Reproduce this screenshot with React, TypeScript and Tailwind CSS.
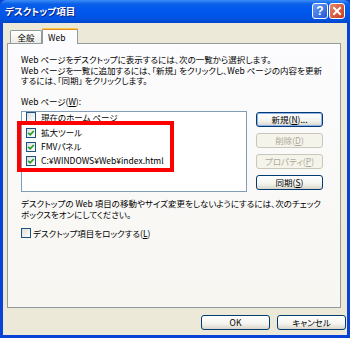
import React from 'react';

const jp = "font-['Noto_Sans_CJK_JP','Noto_Sans',sans-serif] [font-feature-settings:'palt']";

function Check({ checked = false }: { checked?: boolean }) {
  return (
    <span className="w-[10px] h-[10px] shrink-0 border border-[#1c5180] bg-[linear-gradient(135deg,#dcdcd7,#ffffff)] flex items-center justify-center">
      {checked && (
        <svg width="8" height="8" viewBox="0 0 8 8">
          <path d="M1.2 3.8 L3.2 5.8 L6.8 2" fill="none" stroke="#21a121" strokeWidth="1.7" />
        </svg>
      )}
    </span>
  );
}

function Btn({ children, disabled = false, isDefault = false, w = 'w-[67px]' }: { children: React.ReactNode; disabled?: boolean; isDefault?: boolean; w?: string }) {
  return (
    <div
      className={`${w} h-[15px] rounded-[3px] border flex items-center justify-center ${
        disabled
          ? 'border-[#c9c7ba] bg-[#f5f4ea] text-[#aca899]'
          : 'border-[#003c74] bg-[linear-gradient(180deg,#ffffff_0%,#f3f3ef_60%,#d9d5c8_100%)] text-black'
      } ${isDefault ? 'shadow-[inset_0_0_0_1px_#8fb0eb]' : ''}`}
    >
      {children}
    </div>
  );
}

export default function App() {
  const items = [
    { label: '現在のホーム ページ', checked: false },
    { label: '拡大ツール', checked: true },
    { label: 'FMVパネル', checked: true },
    { label: 'C:¥WINDOWS¥Web¥index.html', checked: true },
  ];

  return (
    <div className={`w-[350px] h-[338px] flex flex-col bg-[#0842d6] text-black text-[8.5px] leading-[10.5px] ${jp}`}>
      {/* title bar */}
      <div className="h-[23px] shrink-0 flex items-center pl-[5px] pr-[5px] rounded-t-[6px] bg-[linear-gradient(180deg,#3d8cf7_0%,#0a5fe8_18%,#0058ee_45%,#0054e3_80%,#0046c8_100%)]">
        <span className="text-white font-bold text-[9.5px] [text-shadow:1px_1px_0_#0a1f80]">デスクトップ項目</span>
        <div className="ml-auto flex gap-[1px] -mt-[1px]">
          <div className="w-[16px] h-[16px] rounded-[3px] border border-white bg-[linear-gradient(135deg,#6a9cf5,#2357d8)] flex items-center justify-center text-white font-bold text-[12px] leading-none font-['Liberation_Sans',sans-serif]">
            ?
          </div>
          <div className="w-[16px] h-[16px] rounded-[3px] border border-white bg-[linear-gradient(135deg,#e8876a,#c8391a)] flex items-center justify-center">
            <svg width="10" height="10" viewBox="0 0 10 10">
              <path d="M2 2 L8 8 M8 2 L2 8" stroke="#fff" strokeWidth="2" strokeLinecap="square" />
            </svg>
          </div>
        </div>
      </div>

      {/* client */}
      <div className="flex-1 mx-[3px] mb-[3px] bg-[#ece9d8] flex flex-col pl-[4px] pt-[5px]">
        {/* tabs */}
        <div className="h-[15px] flex items-end pl-[3px]">
          <div className="w-[32px] h-[13px] border border-b-0 border-[#919b9c] rounded-t-[2px] bg-[linear-gradient(180deg,#ffffff,#ecebe5)] flex items-center justify-center">
            全般
          </div>
          <div className="w-[36px] h-[16px] -mb-px relative z-10 border-x border-[#919b9c] bg-[#fcfcfe] flex flex-col rounded-t-[2px]">
            <div className="h-[2px] -mx-px bg-[#e68b2c] rounded-t-[2px] border-t border-[#ffc83c]" />
            <div className="flex-1 flex items-center pl-[5px]">Web</div>
          </div>
        </div>

        {/* panel */}
        <div className="w-[334px] h-[265px] border border-[#919b9c] bg-[linear-gradient(180deg,#fcfcfe_0%,#f7f6f1_100%)] pl-[13px] pt-[10px] flex flex-col">
          <div className="whitespace-nowrap">
            <p>Web ページをデスクトップに表示するには、次の一覧から選択します。</p>
            <p>Web ページを一覧に追加するには、「新規」 をクリックし、Web ページの内容を更新</p>
            <p>するには、「同期」 をクリックします。</p>
          </div>
          <p className="mt-[10px]">
            Web ページ(<span className="underline">W</span>):
          </p>

          <div className="mt-[5px] flex">
            <div className="relative w-[226px] h-[81px] border border-[#7f9db9] bg-white flex flex-col pl-[4px]">
              {items.map((it, i) => (
                <div
                  key={it.label}
                  className={`h-[14px] flex items-center gap-[5px] whitespace-nowrap ${i === 0 ? '-mt-[2px] mb-[1.5px]' : ''}`}
                >
                  <Check checked={it.checked} />
                  <span>{it.label}</span>
                </div>
              ))}
              <div className="absolute left-[-5px] top-[9px] w-[157px] h-[51px] border-[4px] border-[#ff0000]" />
            </div>
            <div className="ml-[9px] mt-[1px] flex flex-col gap-[6px]">
              <Btn isDefault>
                新規(<span className="underline">N</span>)...
              </Btn>
              <Btn disabled>
                削除(<span className="underline">D</span>)
              </Btn>
              <Btn disabled>
                プロパティ(<span className="underline">P</span>)
              </Btn>
              <Btn>
                同期(<span className="underline">S</span>)
              </Btn>
            </div>
          </div>

          <div className="mt-[6px] whitespace-nowrap">
            <p>デスクトップの Web 項目の移動やサイズ変更をしないようにするには、次のチェック</p>
            <p>ボックスをオンにしてください。</p>
          </div>
          <div className="mt-[9px] flex items-center gap-[2px]">
            <Check />
            <span>
              デスクトップ項目をロックする(<span className="underline">L</span>)
            </span>
          </div>
        </div>

        {/* dialog buttons */}
        <div className="w-[339px] mt-[7px] flex justify-end gap-[7px]">
          <Btn w="w-[69px]">OK</Btn>
          <Btn w="w-[69px]">キャンセル</Btn>
        </div>
      </div>
    </div>
  );
}
